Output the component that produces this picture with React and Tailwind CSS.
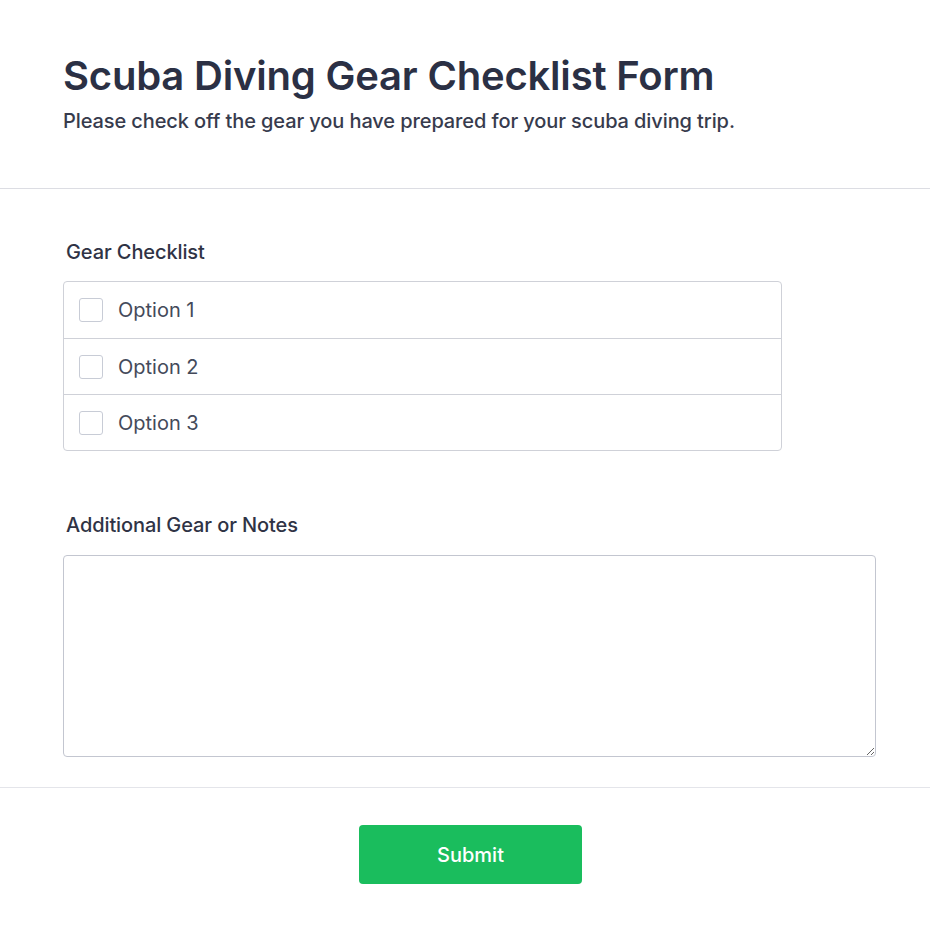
export default function App() {
  const options = ["Option 1", "Option 2", "Option 3"];
  return (
    <div className="min-h-screen bg-white font-['Inter',sans-serif] text-[#2b3044]">
      <div className="px-[63px] pt-[52px] pb-[53px] border-b border-[#dcdde3]">
        <h1 className="text-[40px] leading-[48px] font-semibold tracking-[-0.2px]">
          Scuba Diving Gear Checklist Form
        </h1>
        <p className="mt-[7px] text-[20px] leading-[28px] font-medium tracking-[-0.1px] text-[#373b4d]">
          Please check off the gear you have prepared for your scuba diving trip.
        </p>
      </div>

      <div className="px-[63px] pt-[49px] pb-[30px] border-b border-[#e4e5ea]">
        <div className="pl-[3px] text-[20px] leading-[28px] font-medium tracking-[-0.1px] text-[#2f3345]">
          Gear Checklist
        </div>
        <div className="mt-[15px] w-[719px] border border-[#cfd1d8] rounded-[4px]">
          {options.map((o, i) => (
            <label
              key={o}
              className={`flex items-center h-[56px] pl-[15px] gap-[15px] ${
                i > 0 ? "border-t border-[#cfd1d8]" : ""
              }`}>
              <span className="w-[24px] h-[24px] rounded-[3px] border border-[#c8ccd6] bg-white" />
              <span className="text-[20px] text-[#444a5a]">{o}</span>
            </label>
          ))}
        </div>

        <div className="mt-[60px] pl-[3px] text-[20px] leading-[28px] font-medium tracking-[-0.1px] text-[#2f3345]">
          Additional Gear or Notes
        </div>
        <textarea className="mt-[16px] block w-[813px] h-[202px] border border-[#c3c6d0] rounded-[4px] outline-none resize-y" />
      </div>

      <div className="flex justify-center pl-[63px] pr-[52px] pt-[37px] pb-[50px]">
        <button className="w-[223px] h-[59px] rounded-[4px] bg-[#1abd5d] text-white text-[20px] font-medium">
          Submit
        </button>
      </div>
    </div>
  );
}
